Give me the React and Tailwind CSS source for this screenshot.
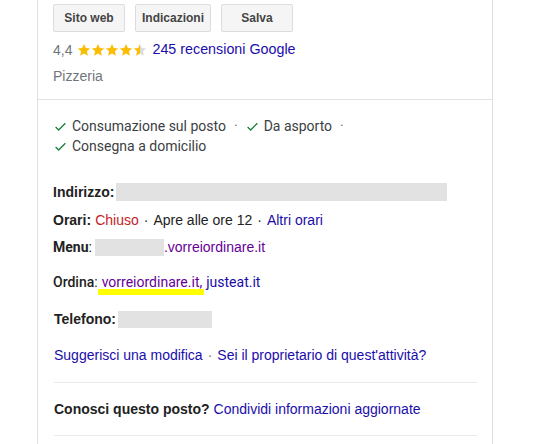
import React from "react";

const Star = ({ half }) => (
  <svg width="14" height="14" viewBox="0 0 24 24" className="shrink-0">
    <defs>
      <linearGradient id="halfg" x1="0" x2="1" y1="0" y2="0">
        <stop offset="50%" stopColor="#fbbc04" />
        <stop offset="50%" stopColor="#dadce0" />
      </linearGradient>
    </defs>
    <path
      d="M12 1.5l3.1 7.1 7.6.7-5.8 5 1.8 7.5L12 17.8l-6.7 4 1.8-7.5-5.8-5 7.6-.7z"
      fill={half ? "url(#halfg)" : "#fbbc04"}
    />
  </svg>
);

const Check = () => (
  <svg width="13" height="13" viewBox="0 0 12 12" className="shrink-0 mr-[5px]">
    <path d="M1.5 6.5l2.8 2.8L10.5 3" fill="none" stroke="#188038" strokeWidth="1.2" />
  </svg>
);

const Btn = ({ children, w }) => (
  <div
    className={`${w} h-[28px] flex items-center justify-center bg-[#f5f5f5] border border-[#dcdcdc] rounded-[2px] text-[12px] font-bold text-[#444]`}
  >
    {children}
  </div>
);

export default function App() {
  return (
    <div
      className="w-[543px] h-[444px] bg-white overflow-hidden text-[14px] text-[#222]"
      style={{ fontFamily: '"Liberation Sans", Arial, sans-serif' }}
    >
      <div className="ml-[37px] w-[456px] h-[444px] border-l border-r border-[#dfdfdf]">
        {/* top */}
        <div className="pl-[15px] pt-[4px] h-[99px]">
          <div className="flex gap-[10px]">
            <Btn w="w-[72px]">Sito web</Btn>
            <Btn w="w-[76px]">Indicazioni</Btn>
            <Btn w="w-[72px]">Salva</Btn>
          </div>
          <div className="mt-[8px] h-[20px] flex items-center">
            <span className="text-[#70757a] mr-[5px]">4,4</span>
            <span className="flex mr-[5px]">
              <Star />
              <Star />
              <Star />
              <Star />
              <Star half />
            </span>
            <span className="text-[#1a0dab] text-[14.3px]">245 recensioni Google</span>
          </div>
          <div className="mt-[6px] h-[20px] flex items-center text-[#70757a]">Pizzeria</div>
        </div>
        <div className="h-px bg-[#e3e3e3]" />
        {/* body */}
        <div className="pl-[16px] pr-[15px]">
          <div
            className="mt-[16px] text-[14px] leading-[20px] text-[#3c4043]"
            style={{ fontFamily: "Roboto, Arial, sans-serif" }}
          >
            <div className="flex items-center">
              <Check />
              <span>Consumazione sul posto</span>
              <span className="text-[#70757a] mx-[8px]">·</span>
              <Check />
              <span>Da asporto</span>
              <span className="text-[#70757a] ml-[8px]">·</span>
            </div>
            <div className="flex items-center">
              <Check />
              <span>Consegna a domicilio</span>
            </div>
          </div>

          <div className="mt-[26px] h-[20px] flex items-center -ml-px">
            <span className="font-bold text-[#222]">Indirizzo:</span>
            <span className="ml-[2px] w-[331px] h-[18px] bg-[#e2e2e2]" />
          </div>

          <div className="mt-[8px] h-[20px] flex items-center -ml-px">
            <span className="font-bold">Orari:</span>
            <span className="ml-[4px] text-[#c5221f]">Chiuso</span>
            <span className="mx-[5px]">·</span>
            <span>Apre alle ore 12</span>
            <span className="mx-[5px]">·</span>
            <span className="text-[#1a0dab]">Altri orari</span>
          </div>

          <div className="mt-[7px] h-[20px] flex items-center -ml-px">
            <span className="font-bold text-[#222]" style={{ fontFamily: "Roboto, Arial, sans-serif" }}>
              Menu
            </span>
            <span style={{ fontFamily: "Roboto, Arial, sans-serif" }}>:</span>
            <span className="ml-[3px] w-[69px] h-[17px] bg-[#e2e2e2]" />
            <span className="text-[#660099]">.vorreiordinare.it</span>
          </div>

          <div className="mt-[15px] h-[20px] flex items-center -ml-px" style={{ fontFamily: "Roboto, Arial, sans-serif" }}>
            <span className="font-medium text-[#222]">Ordina</span>
            <span>:</span>
            <span className="relative ml-[4px] text-[#660099]">
              vorreiordinare.it
              <span className="absolute left-[-4px] right-[-5px] top-[17px] h-[6px] bg-[#ffff00]" />
            </span>
            <span className="text-[#660099]">,</span>
            <span className="ml-[4px] text-[#1a0dab]">justeat.it</span>
          </div>

          <div className="mt-[17px] h-[20px] flex items-center">
            <span className="font-bold">Telefono:</span>
            <span className="ml-[2px] w-[94px] h-[17px] bg-[#e2e2e2]" />
          </div>

          <div className="mt-[16px] h-[20px] flex items-center text-[#1a0dab]">
            <span>Suggerisci una modifica</span>
            <span className="mx-[5px] text-[#70757a]">·</span>
            <span>Sei il proprietario di quest'attività?</span>
          </div>

          <div className="mt-[17px] h-px bg-[#ebebeb]" />

          <div className="mt-[16px] h-[20px] flex items-center">
            <span className="font-bold">Conosci questo posto?</span>
            <span className="ml-[4px] text-[#1a0dab]">Condividi informazioni aggiornate</span>
          </div>

          <div className="mt-[16px] h-px bg-[#ebebeb]" />
        </div>
      </div>
    </div>
  );
}
